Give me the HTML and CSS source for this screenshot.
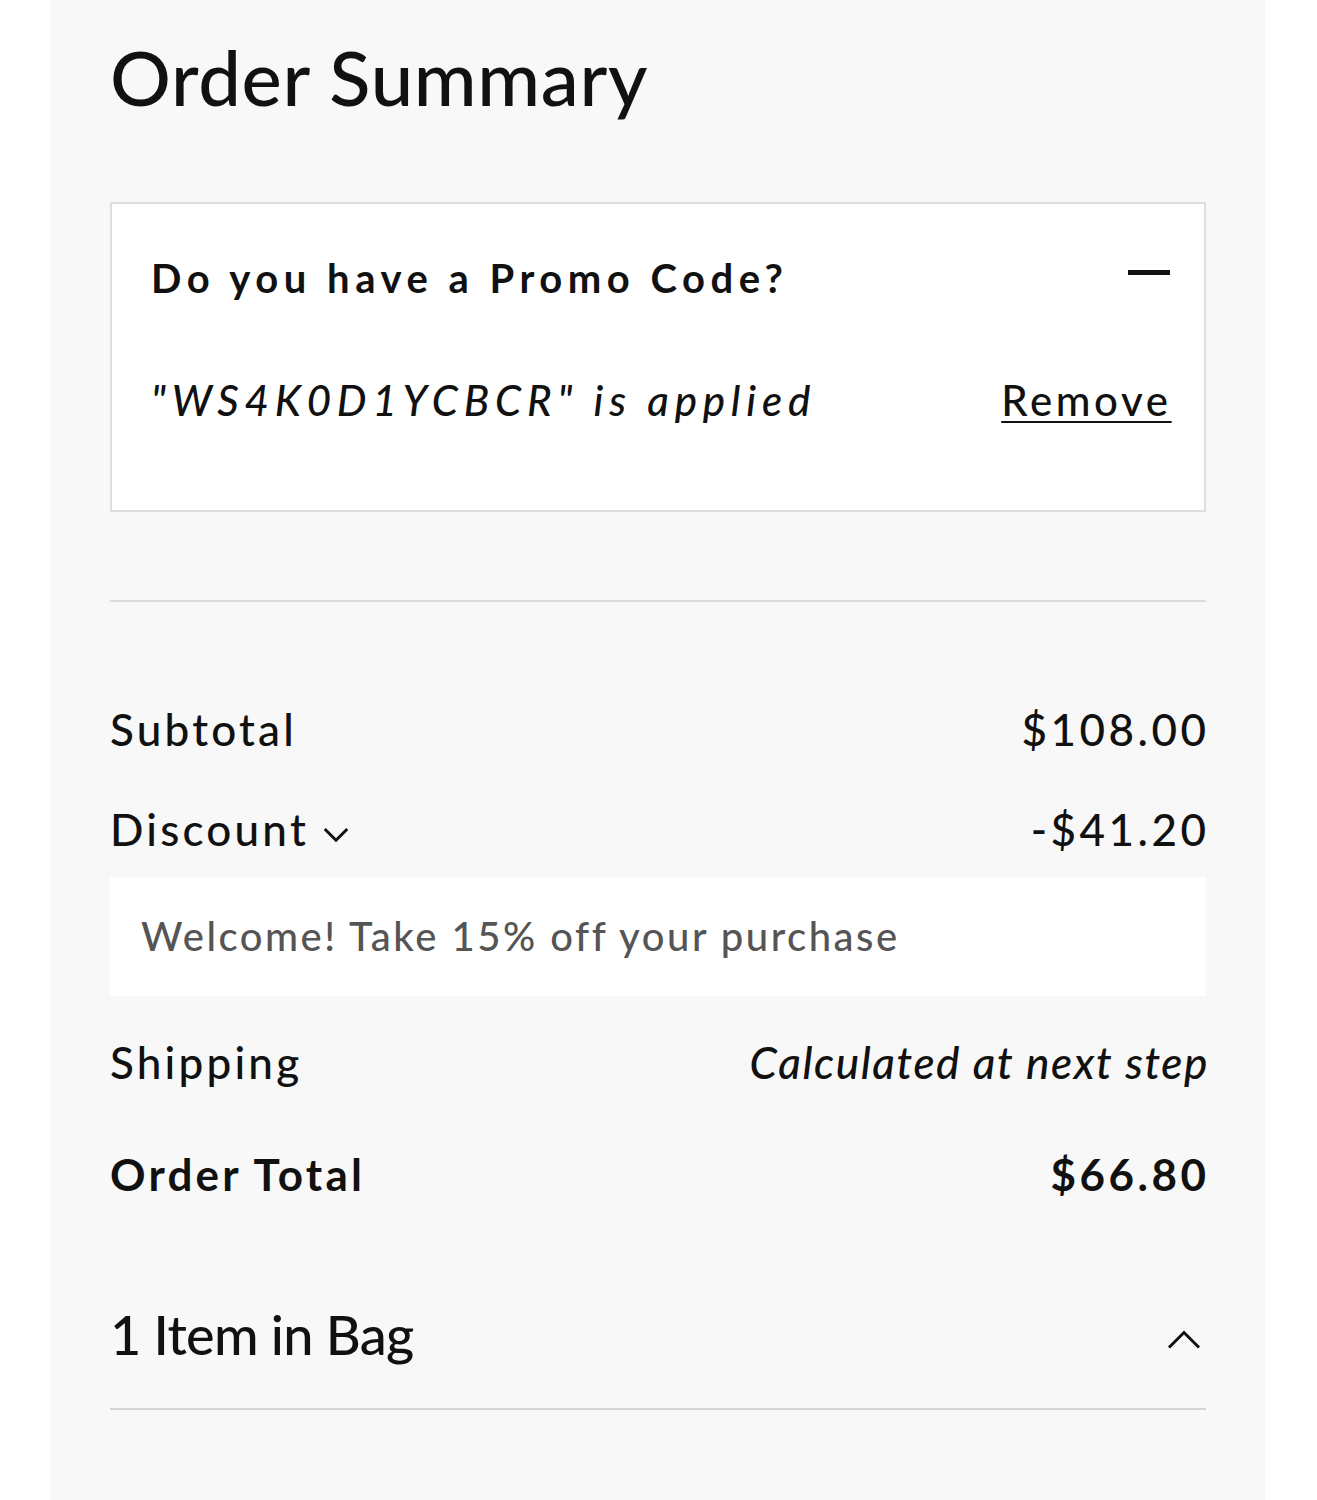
FILE: index.html
```html
<!DOCTYPE html>
<html lang="en">

<head>
    <meta charset="UTF-8">
    <meta name="viewport" content="width=device-width, initial-scale=1.0">
    <title>Order Summary</title>
    <link rel="stylesheet" href="styles.css">
</head>

<body>
    <div class="panel">
        <h1 class="title">Order Summary</h1>

        <div class="promo">
            <div class="promo-head">
                <span>Do you have a Promo Code?</span>
                <span class="minus"></span>
            </div>
            <div class="promo-code">
                <em>"WS4K0D1YCBCR" is applied</em>
                <a href="">Remove</a>
            </div>
        </div>

        <div class="line"></div>

        <div class="rows">
            <div class="row subtotal">
                <span>Subtotal</span>
                <span class="val">$108.00</span>
            </div>
            <div class="row discount">
                <span>Discount<svg class="chev-down" viewBox="0 0 24 24" width="30" height="30">
                        <path d="M3 8l9 9 9-9" fill="none" stroke="#111" stroke-width="2.4" />
                    </svg></span>
                <span class="val">-$41.20</span>
            </div>
            <div class="note">Welcome! Take 15% off your purchase</div>
            <div class="row shipping">
                <span>Shipping</span>
                <em class="val">Calculated at next step</em>
            </div>
            <div class="row total">
                <strong>Order Total</strong>
                <strong class="val">$66.80</strong>
            </div>
        </div>

        <div class="bag">
            <span>1 Item in Bag</span>
            <svg class="chev-up" viewBox="0 0 24 24" width="36" height="36">
                <path d="M2 17L12 7l10 10" fill="none" stroke="#111" stroke-width="2" />
            </svg>
        </div>
    </div>
</body>

</html>
```

FILE: styles.css
```css
body {
    margin: 0;
    font-family: Lato, "Open Sans", sans-serif;
    font-weight: 500;
    color: #111;
}

.panel {
    width: 1215px;
    min-height: 1500px;
    margin-left: 50px;
    padding: 0 59px 0 60px;
    box-sizing: border-box;
    background-color: #f8f8f8;
}

.title {
    margin: 0;
    padding-top: 31px;
    font-size: 76px;
    font-weight: 500;
    line-height: 1.2;
    letter-spacing: 0.7px;
}

.promo {
    margin-top: 80px;
    height: 310px;
    box-sizing: border-box;
    border: 2px solid #dedede;
    background-color: #fff;
    padding: 50px 34px 0 39px;
}

.promo-head {
    display: flex;
    justify-content: space-between;
    font-size: 40px;
    font-weight: 700;
    line-height: 1.2;
    letter-spacing: 5.5px;
}

.minus {
    width: 42px;
    height: 5px;
    margin-top: 16px;
    background-color: #111;
}

.promo-code {
    display: flex;
    justify-content: space-between;
    margin-top: 73px;
    padding-right: 2px;
    font-size: 42px;
    line-height: 1.2;
}

.promo-code em {
    letter-spacing: 5.8px;
}

.promo-code a {
    color: #111;
    letter-spacing: 3.6px;
    margin-right: -3.6px;
    text-decoration: underline;
    text-underline-offset: 5px;
    text-decoration-thickness: 2px;
}

.line {
    height: 2px;
    background-color: #dcdcdc;
}

.promo+.line {
    margin-top: 88px;
}

.rows {
    padding-top: 101px;
}

.row {
    display: flex;
    justify-content: space-between;
    align-items: baseline;
    font-size: 44px;
    line-height: 1.2;
    letter-spacing: 3.2px;
}

.row .val {
    letter-spacing: 3.5px;
    margin-right: -3.5px;
}

.row.shipping .val {
    letter-spacing: 1.6px;
    margin-right: -3px;
}

.row.discount {
    margin-top: 47px;
}

.row.shipping {
    margin-top: 40px;
}

.row.total {
    margin-top: 59px;
}

.row strong {
    font-weight: 700;
}

.chev-down {
    margin-left: 12px;
    vertical-align: -3px;
}

.note {
    margin-top: 21px;
    height: 119px;
    box-sizing: border-box;
    padding-left: 31px;
    display: flex;
    align-items: center;
    background-color: #fff;
    color: #555;
    font-size: 40px;
    letter-spacing: 2.5px;
}

.bag {
    display: flex;
    justify-content: space-between;
    align-items: center;
    margin-top: 94px;
    height: 80px;
    padding-bottom: 34px;
    border-bottom: 2px solid #d6d6d6;
    font-size: 54px;
    letter-spacing: -0.7px;
}

.chev-up {
    margin-top: 12px;
    margin-right: 4px;
}
```
